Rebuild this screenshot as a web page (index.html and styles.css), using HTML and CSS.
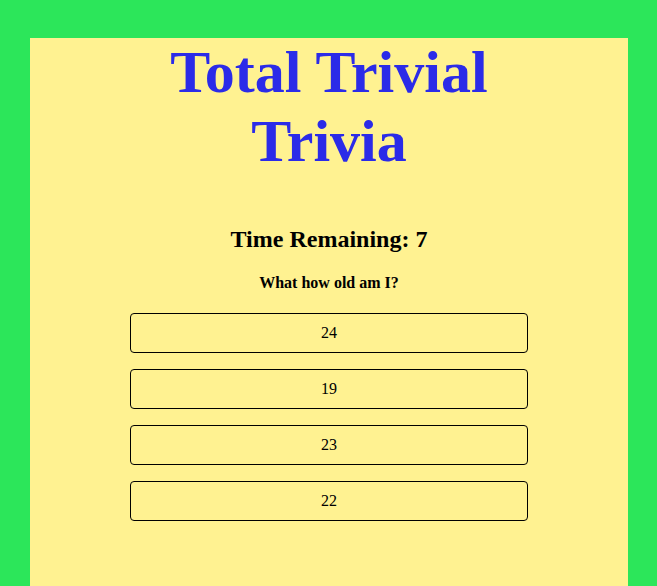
FILE: index.html
```html
<!DOCTYPE html>
<html>
<head>
<meta charset="utf-8">
<title>Total Trivial Trivia</title>
<link rel="stylesheet" href="styles.css">
</head>
<body>
<main class="container">
  <h1 class="title">Total Trivial Trivia</h1>
  <h2 class="timer">Time Remaining: 7</h2>
  <h4 class="question">What how old am I?</h4>
  <div class="answers">
    <button class="answer">24</button>
    <button class="answer">19</button>
    <button class="answer">23</button>
    <button class="answer">22</button>
  </div>
</main>
</body>
</html>
```

FILE: styles.css
```css
html, body {
  margin: 0;
  padding: 0;
}
body {
  background: #2ce65a;
  font-family: "Liberation Serif", "Times New Roman", serif;
  color: #000;
}
.container {
  display: flow-root;
  margin: 38px 29px 0 30px;
  padding: 0 100px;
  min-height: 548px;
  background: #fff291;
  text-align: center;
}
.title {
  margin: 0 0 40px;
  font-size: 60px;
  font-weight: bold;
  color: #2b2be8;
}
.timer {
  margin: 50px 0 20px;
  font-size: 24px;
  font-weight: bold;
}
.question {
  margin: 21px 0;
  font-size: 16px;
  font-weight: bold;
}
.answers {
  display: flex;
  flex-direction: column;
  gap: 16px;
}
.answer {
  height: 40px;
  border: 1px solid #000;
  border-radius: 4px;
  background: transparent;
  font-family: "Liberation Serif", "Times New Roman", serif;
  font-size: 16px;
  color: #000;
  padding: 0;
}
```
